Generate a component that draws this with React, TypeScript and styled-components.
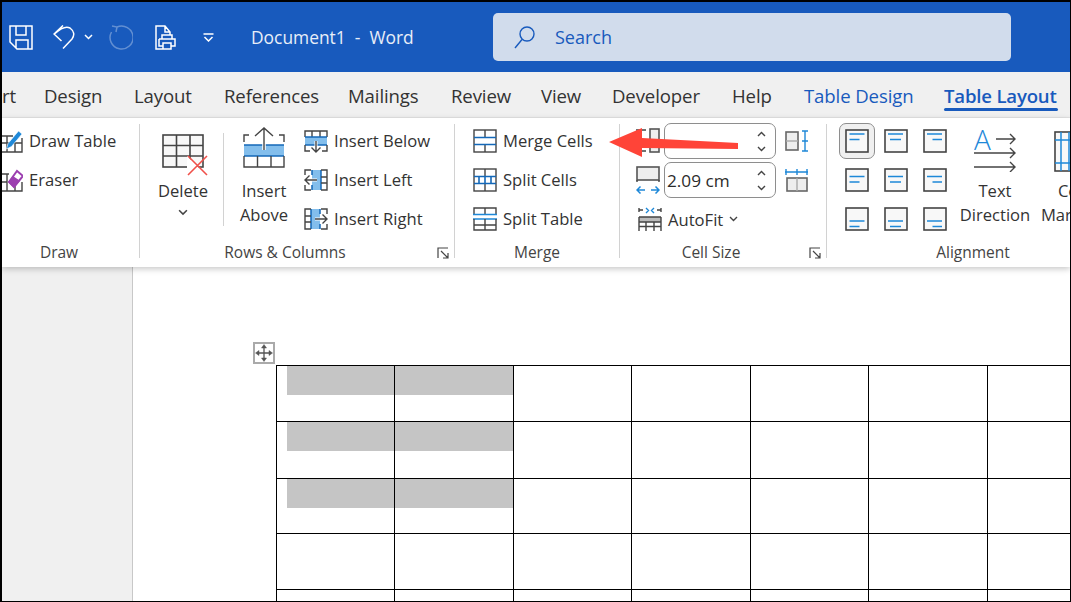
import React from "react";
import styled, { createGlobalStyle } from "styled-components";

const Global = createGlobalStyle`
  html, body { margin: 0; padding: 0; background: #000; }
  #root { width: 1071px; height: 602px; overflow: hidden; }
`;
const DK = "#444";
const BL = "#1E88D8";
const LB = "#83BEEC";
const FILL = "#F8F8F8";

const Frame = styled.div`
  width: 1071px; height: 602px; box-sizing: border-box; padding: 2px 1px 1px 2px;
  font-family: "Open Sans", "Noto Sans", sans-serif; color: #333;
`;
const Window = styled.div`
  position: relative; width: 1068px; height: 599px; overflow: hidden; background: #fff;
  display: flex; flex-direction: column;
`;
const TitleBar = styled.header`
  flex: none; height: 70px; background: #185abd; display: flex; align-items: center; padding-left: 7px; color: #fff;
`;
const QatIcon = styled.svg<{ $ml?: number; $dim?: boolean }>`
  flex: none; margin-left: ${(p) => p.$ml ?? 0}px; fill: none; stroke: #fff; stroke-width: 1.5;
  opacity: ${(p) => (p.$dim ? 0.32 : 1)};
`;
const DocTitle = styled.div`
  flex: none; width: 242px; margin-left: 37px; font-size: 17.4px; white-space: pre; color: #e8eef8; margin-top: -1px;
`;
const SearchBox = styled.div`
  flex: none; width: 518px; height: 48px; box-sizing: border-box; border-radius: 5px; background: #d1dcec;
  display: flex; align-items: center; padding-left: 21px; gap: 20px; color: #185abd; font-size: 18px;
`;
const TabBar = styled.nav`
  flex: none; height: 46px; background: #f0f0f0; display: flex; align-items: flex-start; box-sizing: border-box; border-bottom: 1px solid #e4e4e4;
`;
const Tab = styled.div<{ $w: number; $tone?: "ctx" | "active" }>`
  flex: none; width: ${(p) => p.$w}px; height: 38px; line-height: 48px; white-space: nowrap; font-size: 18.6px;
  color: ${(p) => (p.$tone ? "#185abd" : "#333")};
  font-weight: ${(p) => (p.$tone === "active" ? 600 : 400)};
  letter-spacing: ${(p) => (p.$tone === "active" ? "-0.2px" : "-0.12px")};
  position: relative;
  &::after {
    content: ""; display: ${(p) => (p.$tone === "active" ? "block" : "none")};
    position: absolute; left: 0; width: 114px; top: 36px; height: 3px; border-radius: 2px; background: #185abd;
  }
`;
const Ribbon = styled.section`
  flex: none; height: 149px; box-sizing: border-box; padding-top: 6px; background: #fff; display: flex; align-items: flex-start;
  position: relative; z-index: 2; box-shadow: 0 2px 6px rgba(0,0,0,.22); overflow: hidden; font-size: 16.6px; color: #333;
`;
const Group = styled.div<{ $w: number }>`
  flex: none; width: ${(p) => p.$w}px; height: 143px; display: flex; flex-direction: column;
`;
const Divider = styled.div`
  flex: none; width: 1px; height: 134px; background: #d2d2d2;
`;
const Body = styled.div<{ $pl?: number }>`
  flex: none; height: 116px; display: flex; align-items: flex-start; padding-left: ${(p) => p.$pl ?? 0}px;
`;
const LabelRow = styled.div`
  flex: none; height: 24px; display: flex; align-items: center;
`;
const Label = styled.div<{ $pr?: number }>`
  flex: 1; min-width: 0; text-align: center; font-size: 15.5px; color: #444; padding-right: ${(p) => p.$pr ?? 0}px;
`;
const Launcher = styled.svg`
  flex: none; margin: 1px 5px 0 7px; fill: none; stroke: #444; stroke-width: 1.2;
`;
const Stack = styled.div<{ $ml?: number }>`
  flex: none; display: flex; flex-direction: column; gap: 5px; margin-left: ${(p) => p.$ml ?? 0}px;
`;
const Row = styled.div`
  height: 34px; box-sizing: border-box; padding-bottom: 2px; display: flex; align-items: center; gap: 6px; white-space: nowrap;
  svg { margin-top: 2px; }
`;
const SizeRow = styled.div`
  height: 34px; display: flex; align-items: center; gap: 4px;
`;
const SideIcon = styled.div`
  flex: none; margin-left: 5px; line-height: 0;
`;
const BigButton = styled.div<{ $w: number; $ml?: number }>`
  flex: none; width: ${(p) => p.$w}px; margin-left: ${(p) => p.$ml ?? 0}px; display: flex; flex-direction: column; align-items: center;
  text-align: center; line-height: 24px; white-space: nowrap;
`;
const IconSlot = styled.div<{ $top: number; $left?: number }>`
  height: 55px; box-sizing: border-box; padding-top: ${(p) => p.$top}px; padding-left: ${(p) => p.$left ?? 0}px; line-height: 0;
`;
const DropChevron = styled.div`
  margin-top: 6px; line-height: 0;
`;
const InnerSep = styled.div`
  flex: none; width: 1px; height: 93px; margin-top: 9px; background: #d2d2d2;
`;
const Spin = styled.div`
  flex: none; width: 112px; height: 36px; box-sizing: border-box; border: 1px solid #8e8e8e; border-radius: 7px;
  display: flex; align-items: center; justify-content: space-between; padding: 0 9px 0 2px; font-size: 17.2px; color: #2b2b2b;
`;
const SpinArrows = styled.div`
  display: flex; flex-direction: column; gap: 9px; line-height: 0;
`;
const AutoFit = styled.div`
  display: flex; align-items: center; gap: 6px; margin-left: 2px;
`;
const AlignGrid = styled.div`
  flex: none; display: grid; grid-template-columns: repeat(3, 24px); grid-auto-rows: 24px; gap: 15px; margin-top: 5px;
`;
const AlignCell = styled.div<{ $on?: boolean }>`
  position: relative; width: 24px; height: 24px; line-height: 0;
  &::before {
    content: ""; display: ${(p) => (p.$on ? "block" : "none")}; position: absolute; inset: -6px;
    border-radius: 7px; border: 1px solid #8e8e8e; background: #f0f0f0;
  }
  svg { position: relative; }
`;
const Workspace = styled.main`
  flex: 1; min-height: 0; display: flex; background: #fff;
`;
const Side = styled.aside`
  flex: none; width: 130px; background: #f0f0f0; border-right: 1px solid #c8c8c8;
`;
const Page = styled.div`
  flex: 1; min-width: 0; overflow: hidden; padding: 98px 0 0 143px;
`;
const TableWrap = styled.div`
  position: relative; width: 900px;
`;
const MoveHandle = styled.div`
  position: absolute; left: -23px; top: -23px; width: 22px; height: 22px; box-sizing: border-box; border: 2px solid #aaa; background: #fff;
  display: flex; align-items: center; justify-content: center;
`;
const Grid = styled.div`
  display: grid; grid-template-columns: 118px 119px 118px 119px 118px 119px 118px 119px;
  border-left: 1px solid #000; border-top: 1px solid #000; width: max-content;
`;
const Cell = styled.div<{ $h: number }>`
  height: ${(p) => p.$h}px; box-sizing: border-box; border-right: 1px solid #000; border-bottom: 1px solid #000;
`;
const Shade = styled.div<{ $inset: number }>`
  height: 29px; margin-left: ${(p) => p.$inset}px; background: #c5c5c5;
`;
const ArrowOverlay = styled.svg`
  position: absolute; left: 0; top: 0; z-index: 5; pointer-events: none;
`;

const Ch = ({ w = 9, h = 6, c = "#444", sw = 1.4, up = false }: { w?: number; h?: number; c?: string; sw?: number; up?: boolean }) => (
  <svg width={w} height={h} viewBox="0 0 9 6" fill="none" stroke={c} strokeWidth={sw}>
    <path d={up ? "M1 5 L4.5 1.5 L8 5" : "M1 1 L4.5 4.5 L8 1"} />
  </svg>
);

const I = ({ children, w = 24, h = 24 }: { children: React.ReactNode; w?: number; h?: number }) => (
  <svg width={w} height={h} viewBox={`0 0 ${w} ${h}`} fill="none" stroke={DK} strokeWidth="1.4">
    {children}
  </svg>
);

const DrawTableIcon = () => (
  <I>
    <path d="M1 7 H14 M1 14 H23 M1 23 H23 V9 M8 7 V23 M16 14 V23 M1 7 V23" />
    <path d="M7.5 20 L9 14.5 L19.5 2 L23 5 L12.5 17.5 Z" fill={BL} stroke="#fff" strokeWidth="0.6" />
  </I>
);
const EraserIcon = () => (
  <I>
    <path d="M1 6 H10 M1 14 H8 M1 23 H23 V14 M8 6 V23 M16 16 V23 M1 6 V23" />
    <path d="M10 14 L18 3 L24 8 L15 19 Z" fill="#fff" stroke="#9C3FB0" strokeWidth="2" />
    <path d="M10 14 L14 9 L20 13 L15 19 Z" fill="#9C3FB0" stroke="#9C3FB0" />
  </I>
);
const DeleteIcon = () => (
  <I w={46} h={42}>
    <rect x="1" y="1" width="40" height="32" fill={FILL} strokeWidth="1.6" />
    <path d="M14.5 1 V33 M28 1 V33 M1 11.5 H41 M1 22 H41" strokeWidth="1.6" />
    <path d="M25 22 L45 42 H25 Z M45 21 L25 42" fill="#fff" stroke="none" />
    <path d="M26 22 L45 41 M45 22 L26 41" stroke="#F0504A" strokeWidth="1.6" />
  </I>
);
const InsertAboveIcon = () => (
  <I w={42} h={41}>
    <path d="M1 15 V8 H6 M36 8 H41 V15" />
    <path d="M1 18 H41 V29 H1 Z" fill={LB} stroke="none" />
    <path d="M1 18 H41 M1 29 H41" stroke="#1468B8" strokeWidth="1.5" />
    <path d="M1 29 V40 H41 V29 M14.5 29 V40 M28 29 V40" />
    <path d="M21 1 V23" stroke="#fff" strokeWidth="3.5" />
    <path d="M21 1 V23 M12 9 L21 1 L30 9" />
  </I>
);
const InsertBelowIcon = () => (
  <I>
    <path d="M1 8 V2 H23 V8 M8 2 V8 M16 2 V8" />
    <path d="M1 8 H23 V16 H1 Z" fill={LB} stroke="none" />
    <path d="M1 8 H23 M1 16 H23" stroke="#1468B8" strokeWidth="1.5" />
    <path d="M1 16 V22 H6 M23 16 V22 H18" />
    <path d="M12 12 V22" stroke="#fff" strokeWidth="3" />
    <path d="M12 12 V23 M7.5 18.5 L12 23 L16.5 18.5" />
  </I>
);
const InsertLeftIcon = () => (
  <I>
    <path d="M7 2 H1 V7 M1 17 V22 H7" />
    <path d="M8 2 H17 V22 H8 Z" fill={LB} stroke="none" />
    <path d="M8 2 V7 M8 17 V22 M17 2 V22" stroke="#1468B8" strokeWidth="1.5" />
    <path d="M17 2 H23 V22 H17 M17 9 H23 M17 15 H23" />
    <path d="M13 12 H1" stroke="#fff" strokeWidth="3" />
    <path d="M13 12 H1 M5.5 7.5 L1 12 L5.5 16.5" />
  </I>
);
const InsertRightIcon = () => (
  <I>
    <path d="M17 2 H23 V7 M23 17 V22 H17" />
    <path d="M7 2 H16 V22 H7 Z" fill={LB} stroke="none" />
    <path d="M16 2 V7 M16 17 V22 M7 2 V22" stroke="#1468B8" strokeWidth="1.5" />
    <path d="M7 2 H1 V22 H7 M1 9 H7 M1 15 H7" />
    <path d="M11 12 H23" stroke="#fff" strokeWidth="3" />
    <path d="M11 12 H23 M18.5 7.5 L23 12 L18.5 16.5" />
  </I>
);
const MergeIcon = () => (
  <I>
    <rect x="1" y="1" width="22" height="22" />
    <path d="M12 1 V8 M12 16 V23" />
    <path d="M1 8.5 H23 M1 15.5 H23" stroke="#1468B8" strokeWidth="1.6" />
  </I>
);
const SplitCellsIcon = () => (
  <I>
    <rect x="1" y="1" width="22" height="22" />
    <path d="M12 1 V8 M12 16 V23" />
    <path d="M1 8.5 H23 M1 15.5 H23 M6 8.5 V15.5 M12 8.5 V15.5 M18 8.5 V15.5" stroke="#1468B8" strokeWidth="1.6" />
  </I>
);
const SplitTableIcon = () => (
  <I>
    <path d="M1 7 V1 H23 V7 M12 1 V7" />
    <path d="M0 7.5 H24 M0 12 H24" stroke={BL} strokeWidth="1.6" />
    <path d="M1 12 V23 H23 V12 M12 12 V23 M1 18 H23" />
  </I>
);
const HeightIcon = () => (
  <I w={24} h={36}>
    <rect x="14" y="6" width="9" height="23" fill="#eee" stroke="#555" strokeWidth="1.6" />
    <path d="M0 7 H11 M0 28 H11" strokeDasharray="4 2" />
    <path d="M2 11 V24" stroke={BL} />
  </I>
);
const WidthIcon = () => (
  <I h={28}>
    <rect x="1" y="1" width="22" height="13" fill="#eee" stroke="#555" strokeWidth="1.6" />
    <path d="M1 14 V18 M23 14 V18" strokeDasharray="2 2" />
    <path d="M1 24 H9 M15 24 H23 M4.5 20.5 L1 24 L4.5 27.5 M19.5 20.5 L23 24 L19.5 27.5" stroke={BL} strokeWidth="1.5" />
  </I>
);
const DistRowsIcon = () => (
  <I>
    <rect x="1" y="3" width="12" height="18" fill="#eee" stroke="#666" strokeWidth="1.6" />
    <path d="M1 12 H13" stroke="#aaa" />
    <path d="M17 2 H23 M17 12 H23 M17 22 H23 M20 2 V22" stroke={BL} strokeWidth="1.4" />
  </I>
);
const DistColsIcon = () => (
  <I>
    <rect x="2" y="10" width="20" height="13" fill="#eee" stroke="#666" strokeWidth="1.6" />
    <path d="M12 10 V23" stroke="#aaa" />
    <path d="M0 4 H23 M1 1 V7 M12 1 V7 M22 1 V7" stroke={BL} strokeWidth="1.4" />
  </I>
);
const AutoFitIcon = () => (
  <I h={24}>
    <path d="M1 1 V5 M23 1 V5 M1 3 H5 M19 3 H23" />
    <path d="M8 1 L10.5 3.5 L8 6 M16 1 L13.5 3.5 L16 6" stroke={BL} />
    <rect x="1" y="10" width="22" height="5" fill="#bbb" stroke="none" />
    <path d="M1 10 H23 M1 15 H23 M1 19.5 H23 M1 10 V24 M23 10 V24 M8 15 V24 M16 15 V24" />
  </I>
);
const AlignIcon = ({ v, h }: { v: 0 | 1 | 2; h: 0 | 1 | 2 }) => {
  const y = [5, 8.5, 14][v];
  const first = [[4.5, 19.5], [4, 19], [4, 19]][h];
  const second = [[4.5, 14.5], [6, 17], [9.5, 19]][h];
  return (
    <I>
      <rect x="1" y="1" width="22" height="22" fill={FILL} strokeWidth="1.6" />
      <path d={`M${first[0]} ${y} H${first[1]} M${second[0]} ${y + 5.5} H${second[1]}`} stroke={BL} strokeWidth="1.5" />
    </I>
  );
};
const TextDirSvg = styled.svg`
  fill: none; stroke: ${DK}; stroke-width: 1.4;
  text { font-family: "Open Sans", sans-serif; font-size: 28px; font-weight: 300; fill: ${BL}; stroke: none; }
`;
const TextDirIcon = () => (
  <TextDirSvg width={42} height={44} viewBox="0 0 42 44">
    <text x="0" y="22">A</text>
    <path d="M22 11 H41 M36 6 L41 11 L36 16 M0 25 H41 M36 20 L41 25 L36 30 M0 39 H41 M36 34 L41 39 L36 44" />
  </TextDirSvg>
);
const CellMarginsIcon = () => (
  <I w={46} h={41}>
    <rect x="1" y="1" width="44" height="39" fill={FILL} strokeWidth="1.6" />
    <path d="M7 1 V40 M15 1 V40 M1 9 H45 M1 32 H45" stroke={BL} strokeWidth="1.5" />
  </I>
);
const MoveGlyph = () => (
  <svg width="18" height="18" viewBox="0 0 18 18" fill="#555" stroke="#555" strokeWidth="1.3">
    <path d="M9 2 V16 M2 9 H16" />
    <path d="M9 0.5 L11.5 4 H6.5 Z M9 17.5 L6.5 14 H11.5 Z M0.5 9 L4 6.5 V11.5 Z M17.5 9 L14 11.5 V6.5 Z" strokeWidth="0.5" />
  </svg>
);
const LauncherIcon = () => (
  <Launcher width={12} height={12} viewBox="0 0 12 12"><path d="M1 11 V1 H11 M4 4 L11 11 M11 6 V11 H6" /></Launcher>
);

const tabs: { t: string; w: number; tone?: "ctx" | "active" }[] = [
  { t: "rt", w: 42 }, { t: "Design", w: 90 }, { t: "Layout", w: 90 }, { t: "References", w: 124 },
  { t: "Mailings", w: 103 }, { t: "Review", w: 90 }, { t: "View", w: 71 }, { t: "Developer", w: 120 },
  { t: "Help", w: 72 }, { t: "Table Design", w: 140, tone: "ctx" }, { t: "Table Layout", w: 124, tone: "active" },
];
const rowHeights = [56, 57, 55, 56, 40];

export default function App() {
  return (
    <Frame>
      <Global />
      <Window>
        <TitleBar>
          <QatIcon width={24} height={25} viewBox="0 0 24 25">
            <path d="M1 1 H23 V24 H8 L1 17 Z M7 1 V10 H17 V1 M7 23 V15 H19 V24" />
          </QatIcon>
          <QatIcon width={22} height={24} viewBox="0 0 22 24" $ml={20}>
            <path d="M10 0.5 L1 9 L8.5 16 M2 8.5 C8 3, 13 1, 17 3 C21 6, 22 10, 19 14 L10 23.5" />
          </QatIcon>
          <QatIcon width={9} height={6} viewBox="0 0 9 6" $ml={9}>
            <path d="M1 1 L4.5 4.5 L8 1" />
          </QatIcon>
          <QatIcon width={24} height={25} viewBox="0 0 24 25" $ml={16} $dim>
            <path d="M8 2 A11.5 11.5 0 1 1 2.5 7 M3 1 L8 2 L7 7" />
          </QatIcon>
          <QatIcon width={21} height={25} viewBox="0 0 21 25" $ml={22}>
            <path d="M8 24 H1 V1 H10 L15 7 V10 M10 1 V7 H15 M7 10 H17 V14 H7 Z M4 14 H20 V21 H16 M8 21 H4 V14 M8 18 H16 V24 H8 Z" />
          </QatIcon>
          <QatIcon width={11} height={9} viewBox="0 0 11 9" $ml={27}>
            <path d="M0.5 1 H10.5 M1.5 4 L5.5 8 L9.5 4" />
          </QatIcon>
          <DocTitle>{"Document1  -  Word"}</DocTitle>
          <SearchBox>
            <svg width={21} height={23} viewBox="0 0 21 23" fill="none" stroke="#185abd" strokeWidth="1.4">
              <circle cx="13" cy="8" r="7" />
              <path d="M8 13.5 L1 22" />
            </svg>
            Search
          </SearchBox>
        </TitleBar>
        <TabBar>
          {tabs.map((t) => (
            <Tab key={t.t} $w={t.w} $tone={t.tone}>{t.t}</Tab>
          ))}
        </TabBar>
        <Ribbon>
          <Group $w={137}>
            <Body>
              <Stack $ml={-3}>
                <Row><DrawTableIcon />Draw Table</Row>
                <Row><EraserIcon />Eraser</Row>
              </Stack>
            </Body>
            <LabelRow><Label $pr={23}>Draw</Label></LabelRow>
          </Group>
          <Divider />
          <Group $w={314}>
            <Body $pl={3}>
              <BigButton $w={80}>
                <IconSlot $top={10} $left={3}><DeleteIcon /></IconSlot>
                Delete
                <DropChevron><Ch w={10} h={7} /></DropChevron>
              </BigButton>
              <InnerSep />
              <BigButton $w={80}>
                <IconSlot $top={3}><InsertAboveIcon /></IconSlot>
                <div>Insert<br />Above</div>
              </BigButton>
              <Stack>
                <Row><InsertBelowIcon />Insert Below</Row>
                <Row><InsertLeftIcon />Insert Left</Row>
                <Row><InsertRightIcon />Insert Right</Row>
              </Stack>
            </Body>
            <LabelRow>
              <Label>Rows &amp; Columns</Label>
              <LauncherIcon />
            </LabelRow>
          </Group>
          <Divider />
          <Group $w={164}>
            <Body $pl={18}>
              <Stack>
                <Row><MergeIcon />Merge Cells</Row>
                <Row><SplitCellsIcon />Split Cells</Row>
                <Row><SplitTableIcon />Split Table</Row>
              </Stack>
            </Body>
            <LabelRow><Label>Merge</Label></LabelRow>
          </Group>
          <Divider />
          <Group $w={206}>
            <Body $pl={16}>
              <Stack>
                <SizeRow>
                  <HeightIcon />
                  <Spin><span /><SpinArrows><Ch up /><Ch /></SpinArrows></Spin>
                  <SideIcon><DistRowsIcon /></SideIcon>
                </SizeRow>
                <SizeRow>
                  <WidthIcon />
                  <Spin><span>2.09 cm</span><SpinArrows><Ch up /><Ch /></SpinArrows></Spin>
                  <SideIcon><DistColsIcon /></SideIcon>
                </SizeRow>
                <SizeRow>
                  <AutoFit><AutoFitIcon />AutoFit <Ch /></AutoFit>
                </SizeRow>
              </Stack>
            </Body>
            <LabelRow>
              <Label>Cell Size</Label>
              <LauncherIcon />
            </LabelRow>
          </Group>
          <Divider />
          <Group $w={292}>
            <Body $pl={18}>
              <AlignGrid>
                {([0, 1, 2] as const).flatMap((v) =>
                  ([0, 1, 2] as const).map((h) => (
                    <AlignCell key={`${v}${h}`} $on={v === 0 && h === 0}><AlignIcon v={v} h={h} /></AlignCell>
                  ))
                )}
              </AlignGrid>
              <BigButton $w={80} $ml={8}>
                <IconSlot $top={4}><TextDirIcon /></IconSlot>
                <div>Text<br />Direction</div>
              </BigButton>
              <BigButton $w={74}>
                <IconSlot $top={7} $left={10}><CellMarginsIcon /></IconSlot>
                <div>Cell<br />Margins</div>
              </BigButton>
            </Body>
            <LabelRow><Label>Alignment</Label></LabelRow>
          </Group>
        </Ribbon>
        <Workspace>
          <Side />
          <Page>
            <TableWrap>
              <MoveHandle><MoveGlyph /></MoveHandle>
              <Grid>
                {rowHeights.flatMap((h, r) =>
                  Array.from({ length: 8 }, (_, c) => (
                    <Cell key={`${r}-${c}`} $h={h}>
                      {r < 3 && c === 0 && <Shade $inset={10} />}
                      {r < 3 && c === 1 && <Shade $inset={0} />}
                    </Cell>
                  ))
                )}
              </Grid>
            </TableWrap>
          </Page>
        </Workspace>
        <ArrowOverlay width={1068} height={599} viewBox="0 0 1068 599">
          <path d="M607 140 L640 126 L640 136 L736 141 L736 147 L640 146 L640 155 Z" fill="#FF4438" />
        </ArrowOverlay>
      </Window>
    </Frame>
  );
}
